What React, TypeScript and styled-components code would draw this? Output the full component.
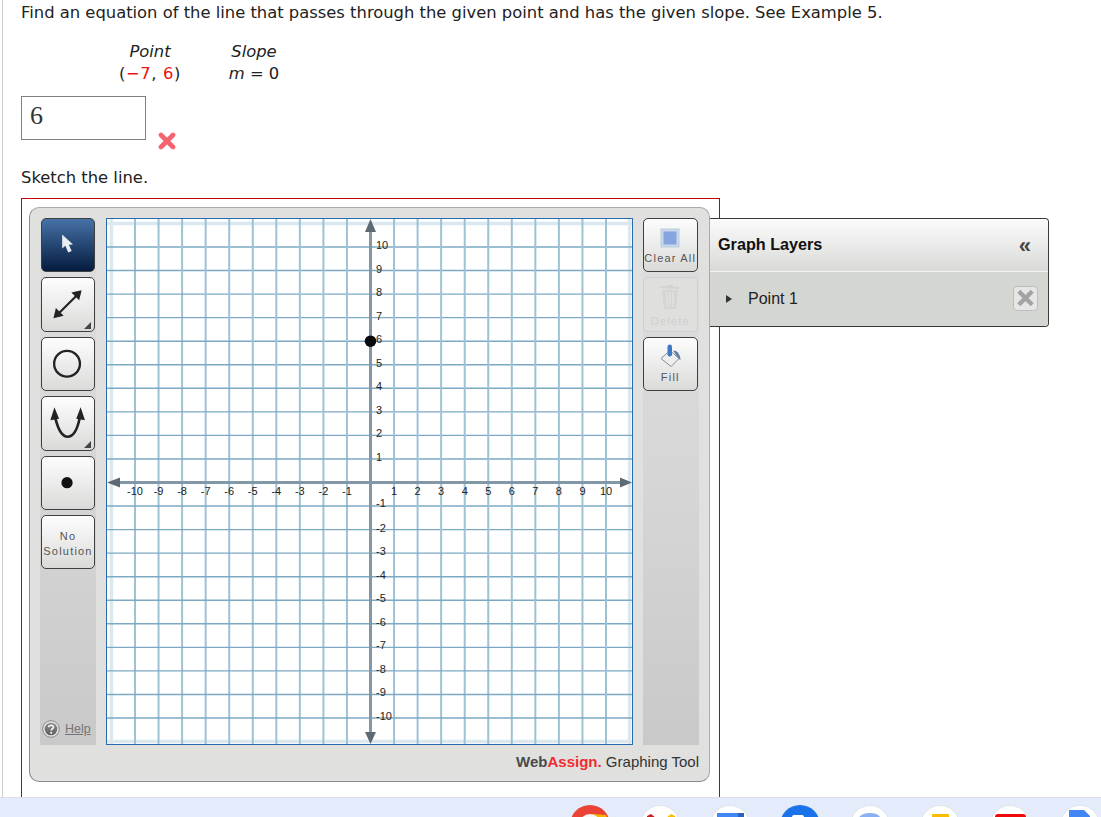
import { ReactNode } from "react";
import styled, { createGlobalStyle } from "styled-components";

const GlobalStyle = createGlobalStyle`
  html, body {
    margin: 0;
    padding: 0;
    background: #fff;
    overflow: hidden;
  }
`;

const UNIT = 23.55;
const OX = 264.5;
const OY = 264.5;
const TICKS = Array.from({ length: 21 }, (_, i) => i - 10).filter((n) => n !== 0);

const GraphPlot = () => (
  <PlotSvg viewBox="0 0 527 527" width="527" height="527">
    <rect x="0" y="0" width="527" height="527" fill="#fff" />
    {[-11, 11].map((n) => (
      <g key={n} stroke="#dbe8ef" strokeWidth="3.5">
        <line x1={OX + n * UNIT} y1="0" x2={OX + n * UNIT} y2="527" />
        <line x1="0" y1={OY + n * UNIT} x2="527" y2={OY + n * UNIT} />
      </g>
    ))}
    {TICKS.map((n) => (
      <g key={n}>
        <line x1={OX + n * UNIT} y1="0" x2={OX + n * UNIT} y2="527" stroke="#9dc2d5" strokeWidth="2" />
        <line x1="0" y1={OY + n * UNIT} x2="527" y2={OY + n * UNIT} stroke="#7ba9c4" strokeWidth="1.4" />
      </g>
    ))}
    <line x1={OX} y1="6" x2={OX} y2="521" stroke="#8398a6" strokeWidth="3" />
    <line x1="6" y1={OY} x2="521" y2={OY} stroke="#8398a6" strokeWidth="3" />
    <polygon points={`${OX},1 ${OX - 5.5},14 ${OX + 5.5},14`} fill="#5d6a73" />
    <polygon points={`${OX},526 ${OX - 5.5},514 ${OX + 5.5},514`} fill="#5d6a73" />
    <polygon points={`1,${OY} 14,${OY - 5} 14,${OY + 5}`} fill="#5d6a73" />
    <polygon points={`526,${OY} 514,${OY - 5} 514,${OY + 5}`} fill="#5d6a73" />
    {TICKS.map((n) => (
      <PlotLabel key={`x${n}`} x={OX + n * UNIT} y={OY + 12.5} textAnchor="middle">
        {n}
      </PlotLabel>
    ))}
    {TICKS.map((n) => (
      <PlotLabel key={`y${n}`} x={OX + 5.5} y={OY - n * UNIT + (n === -1 ? 1 : 2)}>
        {n}
      </PlotLabel>
    ))}
    <circle cx={OX} cy={OY - 6 * UNIT} r="5.8" fill="#07090c" />
  </PlotSvg>
);

const CornerMark = () => (
  <svg viewBox="0 0 54 54" width="54" height="54" style={{ position: "absolute", left: 0, top: 0 }}>
    <polygon points="49,44 49,51 42,51" fill="#444" />
  </svg>
);

const ArrowIcon = () => (
  <svg viewBox="0 0 54 54" width="54" height="54">
    <path d="M21 16 L21 30.5 L24.3 27.6 L27.2 34.5 L30.8 33 L27.9 26.5 L32.2 26.2 Z" fill="#e8edf4" />
  </svg>
);

const LineIcon = () => (
  <svg viewBox="0 0 54 54" width="54" height="54">
    <line x1="16" y1="38" x2="37" y2="17" stroke="#222" strokeWidth="2.2" />
    <polygon points="41,12.5 38.5,23 30.5,15" fill="#222" />
    <polygon points="12,41.5 14.5,31 22.5,39" fill="#222" />
  </svg>
);

const CircleIcon = () => (
  <svg viewBox="0 0 54 54" width="54" height="54">
    <circle cx="26" cy="26.5" r="13.3" fill="none" stroke="#222" strokeWidth="2.4" />
  </svg>
);

const ParabolaIcon = () => (
  <svg viewBox="0 0 54 54" width="54" height="54">
    <path d="M14 22 C17 34 21.5 41 26.8 41 C32 41 36.5 34 39 22" fill="none" stroke="#222" strokeWidth="2.7" />
    <polygon points="13,10.5 8.8,24 17.8,22.5" fill="#222" />
    <polygon points="40,10.5 44.5,24 35.5,22.5" fill="#222" />
  </svg>
);

const DotIcon = () => (
  <svg viewBox="0 0 54 54" width="54" height="54">
    <circle cx="26" cy="26.5" r="5.8" fill="#111" />
  </svg>
);

const ClearIcon = () => (
  <svg viewBox="0 0 20 20" width="20" height="20">
    <rect x="1" y="1" width="18" height="18" fill="#c9d8ea" stroke="#bccbe0" />
    <rect x="3.5" y="3.5" width="13" height="13" fill="#86a5de" />
  </svg>
);

const TrashIcon = () => (
  <svg viewBox="0 0 22 28" width="22" height="28">
    <path d="M1 4 L20 5 M8 3 L14 3" stroke="#d3d3d2" strokeWidth="2" />
    <path d="M3 7 H19 L17 26 H5 Z" fill="#d5d5d4" />
    <path d="M8 9 V24 M11 9 V24 M14 9 V24" stroke="#e3e3e2" strokeWidth="1.3" />
  </svg>
);

const FillIcon = () => (
  <svg viewBox="0 0 24 24" width="24" height="24">
    <g transform="translate(1 1.5)">
      <path d="M2 14 L11 6 L20 14 L12 22 Z" fill="#eceff1" stroke="#8c8c8c" />
      <path d="M14 6 C19 6 21.5 11 21.5 16 L18 12 Z" fill="#5f7fa8" />
      <rect x="8.5" y="0" width="4.5" height="12" rx="2.2" fill="#3f78c4" />
    </g>
  </svg>
);

const HelpIcon = () => (
  <svg viewBox="0 0 18 18" width="18" height="18">
    <defs>
      <linearGradient id="helpFill" x1="0" y1="0" x2="0" y2="1">
        <stop offset="0" stopColor="#8d8d8d" />
        <stop offset="1" stopColor="#5d5d5d" />
      </linearGradient>
    </defs>
    <circle cx="9" cy="9" r="8.3" fill="#e4e4e4" stroke="#8a8a8a" />
    <circle cx="9" cy="9" r="6.3" fill="url(#helpFill)" />
    <path d="M6.7 7.3 C6.8 4.7 11.4 4.8 11.4 7.2 C11.4 8.8 9.2 8.8 9.2 10.6" fill="none" stroke="#f2f2f2" strokeWidth="1.7" />
    <circle cx="9.2" cy="12.8" r="1.1" fill="#f2f2f2" />
  </svg>
);

const WrongMark = () => (
  <svg viewBox="0 0 18 18" width="18" height="18">
    <path d="M3 3 L15 15 M15 3 L3 15" stroke="#f6626e" strokeWidth="4.6" strokeLinecap="round" />
  </svg>
);

const DOCK: ReactNode[] = [
  <>
    <circle cx="20" cy="20" r="20" fill="#ea4335" />
    <path d="M22 9 L36 10 L40 20 L26 20 Z" fill="#f4b400" />
    <circle cx="20" cy="20" r="11" fill="#f5f5f5" />
  </>,
  <>
    <circle cx="20" cy="20" r="19.5" fill="#fff" stroke="#dfe3ea" />
    <path d="M7 11 L11 9 L16 13 L13 18 L7 14 Z" fill="#c5221f" />
    <path d="M26 13 L31 9 L35 11 L35 16 L27 17 Z" fill="#fbbc04" />
  </>,
  <>
    <circle cx="20" cy="20" r="19.5" fill="#fff" stroke="#dfe3ea" />
    <rect x="7" y="8" width="27" height="14" fill="#4285f4" />
    <rect x="28" y="8" width="6" height="14" fill="#2a62c4" />
  </>,
  <>
    <circle cx="20" cy="20" r="20" fill="#1a73e8" />
    <rect x="12" y="10" width="12" height="12" rx="2" fill="#fff" />
  </>,
  <>
    <circle cx="20" cy="20" r="19.5" fill="#fff" stroke="#dfe3ea" />
    <path d="M7 20 C7 11 12 8 20 8 C28 8 32 11 32 20 Z" fill="#8ab0f4" />
  </>,
  <>
    <circle cx="20" cy="20" r="19.5" fill="#fff" stroke="#dfe3ea" />
    <rect x="12" y="9" width="17" height="14" fill="#fbbc04" />
  </>,
  <>
    <circle cx="20" cy="20" r="19.5" fill="#fff" stroke="#dfe3ea" />
    <rect x="5" y="9" width="31" height="14" rx="3" fill="#ee0a0a" />
  </>,
  <>
    <circle cx="20" cy="20" r="19.5" fill="#fff" stroke="#dfe3ea" />
    <path d="M9 5 H24 L30 11 V24 H9 Z" fill="#4285f4" />
  </>,
];

const App = () => (
  <>
    <GlobalStyle />
    <Viewport>
      <Sheet>
        <Prompt>
          Find an equation of the line that passes through the given point and has the given slope. See Example 5.
        </Prompt>
        <GivenTable>
          <GivenCell>
            <em>Point</em>
            <GivenValue>
              (<Red>−7</Red>, <Red>6</Red>)
            </GivenValue>
          </GivenCell>
          <GivenCell>
            <em>Slope</em>
            <span>
              <em>m</em> = 0
            </span>
          </GivenCell>
        </GivenTable>
        <AnswerRow>
          <AnswerBox>6</AnswerBox>
          <WrongSlot>
            <WrongMark />
          </WrongSlot>
        </AnswerRow>
        <SketchLabel>Sketch the line.</SketchLabel>
        <RedFrame>
          <ToolPanel>
            <PanelBody>
              <ToolColumn>
                <ToolButton $active>
                  <ArrowIcon />
                </ToolButton>
                <ToolButton>
                  <LineIcon />
                  <CornerMark />
                </ToolButton>
                <ToolButton>
                  <CircleIcon />
                </ToolButton>
                <ToolButton>
                  <ParabolaIcon />
                  <CornerMark />
                </ToolButton>
                <ToolButton>
                  <DotIcon />
                </ToolButton>
                <ToolButton $nudge={4}>
                  <ButtonText>
                    No
                    <br />
                    Solution
                  </ButtonText>
                </ToolButton>
                <HelpRow>
                  <HelpIcon />
                  <HelpLink>Help</HelpLink>
                </HelpRow>
              </ToolColumn>
              <GraphPlot />
              <ActionColumn>
                <ToolButton $nudge={4}>
                  <ClearIcon />
                  <ButtonText>Clear All</ButtonText>
                </ToolButton>
                <ToolButton $disabled $nudge={2}>
                  <TrashIcon />
                  <ButtonText $disabled>Delete</ButtonText>
                </ToolButton>
                <ToolButton>
                  <FillIcon />
                  <ButtonText>Fill</ButtonText>
                </ToolButton>
              </ActionColumn>
            </PanelBody>
            <Brand>
              <BrandWeb>Web</BrandWeb>
              <BrandAssign>Assign.</BrandAssign> Graphing Tool
            </Brand>
          </ToolPanel>
          <LayersPanel>
            <LayersHeader>
              <LayersTitle>Graph Layers</LayersTitle>
              <Collapse>«</Collapse>
            </LayersHeader>
            <LayerRow>
              <LayerCaret />
              <LayerName>Point 1</LayerName>
              <LayerRemove>
                <svg viewBox="0 0 24 24" width="24" height="24">
                  <path d="M5 5 L19 19 M19 5 L5 19" stroke="#a3a3a3" strokeWidth="4.6" />
                </svg>
              </LayerRemove>
            </LayerRow>
          </LayersPanel>
        </RedFrame>
      </Sheet>
      <Dock>
        {DOCK.map((icon, i) => (
          <svg key={i} viewBox="0 0 40 40" width="40" height="40">
            {icon}
          </svg>
        ))}
      </Dock>
    </Viewport>
  </>
);

export default App;

const Viewport = styled.div`
  width: 1101px;
  height: 817px;
  overflow: hidden;
  display: flex;
  flex-direction: column;
  font-family: "DejaVu Sans", sans-serif;
  color: #222;
`;

const Sheet = styled.div`
  height: 797px;
  flex-shrink: 0;
  margin-left: 2px;
  padding: 1px 0 0 18px;
  border-left: 1px solid #ccc;
  box-sizing: border-box;
  display: flex;
  flex-direction: column;
`;

const Prompt = styled.div`
  font-size: 16.38px;
  line-height: 24px;
  white-space: nowrap;
`;

const GivenTable = styled.div`
  display: flex;
  height: 44px;
  margin-top: 16px;
  padding-left: 77px;
`;

const GivenCell = styled.div`
  width: 104px;
  display: flex;
  flex-direction: column;
  align-items: center;
  font-size: 16.38px;
  line-height: 22px;
`;

const GivenValue = styled.span`
  letter-spacing: 0.6px;
`;

const Red = styled.span`
  color: #f01010;
`;

const AnswerRow = styled.div`
  display: flex;
  margin-top: 11px;
`;

const AnswerBox = styled.div`
  width: 125px;
  height: 44px;
  box-sizing: border-box;
  border: 1px solid #808080;
  padding-left: 8px;
  font-family: "Liberation Serif", serif;
  font-size: 26px;
  line-height: 38px;
  color: #333;
`;

const WrongSlot = styled.div`
  margin: 36px 0 0 12px;
  height: 18px;
`;

const SketchLabel = styled.div`
  font-size: 16.38px;
  line-height: 22px;
  margin-top: 17px;
`;

const RedFrame = styled.div`
  flex: 1;
  width: 699px;
  box-sizing: border-box;
  margin-top: 9px;
  border: 1px solid #c40000;
  border-bottom: none;
  padding: 8px 0 0 7px;
  display: flex;
  align-items: flex-start;
`;

const ToolPanel = styled.div`
  width: 681px;
  height: 575px;
  flex-shrink: 0;
  box-sizing: border-box;
  padding: 10px 10px 0 10px;
  background: #e0e0df;
  border-left: 1px solid #8b8b8b;
  border-bottom: 1px solid #8b8b8b;
  border-top: 1px solid #aaa;
  border-right: 1px solid #aaa;
  border-radius: 10px;
`;

const PanelBody = styled.div`
  display: flex;
  gap: 10px;
  height: 527px;
`;

const ToolColumn = styled.div`
  position: relative;
  width: 56px;
  flex-shrink: 0;
  display: flex;
  flex-direction: column;
  gap: 5px;
  background: linear-gradient(#dedede, #d6d6d6 50%, #c9c9c9);
  align-items: center;
`;

const ActionColumn = styled(ToolColumn)`
  align-items: flex-start;
`;

const PlotSvg = styled.svg`
  display: block;
  flex-shrink: 0;
  box-sizing: border-box;
  outline: 1px solid #2a6cab;
  outline-offset: -1px;
`;

const PlotLabel = styled.text`
  font-family: "Liberation Sans", sans-serif;
  font-size: 11px;
  fill: #222;
`;

const ToolButton = styled.div<{ $active?: boolean; $disabled?: boolean; $nudge?: number }>`
  position: relative;
  width: 54.5px;
  height: 54.4px;
  flex-shrink: 0;
  box-sizing: border-box;
  padding-top: ${(p) => p.$nudge ?? 0}px;
  border: 1px solid ${(p) => (p.$disabled ? "#cfcfce" : "#3f3f3f")};
  border-radius: 5px;
  display: flex;
  flex-direction: column;
  align-items: center;
  justify-content: center;
  gap: 3px;
  background: ${(p) =>
    p.$active
      ? "linear-gradient(#4672a6, #041b3f)"
      : p.$disabled
        ? "#dfdfde"
        : "linear-gradient(#fdfdfd, #dadbd9)"};
`;

const ButtonText = styled.div<{ $disabled?: boolean }>`
  font-family: "Liberation Sans", sans-serif;
  font-size: 11px;
  line-height: 15px;
  letter-spacing: 1.2px;
  text-align: center;
  white-space: nowrap;
  color: ${(p) => (p.$disabled ? "#d0d0cf" : "#555")};
`;

const HelpRow = styled.div`
  position: absolute;
  left: 2px;
  bottom: 7px;
  display: flex;
  align-items: center;
  gap: 5px;
`;

const HelpLink = styled.span`
  font-family: "Liberation Sans", sans-serif;
  font-size: 12.5px;
  color: #757575;
  text-decoration: underline;
`;

const Brand = styled.div`
  margin-top: 7px;
  text-align: right;
  font-family: "Liberation Sans", sans-serif;
  font-size: 15px;
  line-height: 20px;
  color: #333;
`;

const BrandWeb = styled.b`
  color: #4a4a4a;
`;

const BrandAssign = styled.b`
  color: #f02b30;
`;

const LayersPanel = styled.div`
  width: 339px;
  height: 109px;
  flex-shrink: 0;
  margin-top: 11px;
  box-sizing: border-box;
  border: 1px solid #3a3a3a;
  border-left: none;
  border-radius: 0 4px 4px 0;
  display: flex;
  flex-direction: column;
  font-family: "Liberation Sans", sans-serif;
`;

const LayersHeader = styled.div`
  height: 53px;
  box-sizing: border-box;
  padding: 0 17px 2px 8px;
  display: flex;
  align-items: center;
  justify-content: space-between;
  background: linear-gradient(#fbfbfb, #d9dad8);
  border-bottom: 1px solid #f4f4f4;
  border-radius: 0 4px 0 0;
`;

const LayersTitle = styled.span`
  font-size: 16.2px;
  font-weight: bold;
  color: #111;
`;

const Collapse = styled.span`
  margin-top: 4px;
  font-size: 22px;
  font-weight: bold;
  color: #444;
`;

const LayerRow = styled.div`
  flex: 1;
  display: flex;
  align-items: center;
  padding: 0 10px 0 16px;
  background: #d4d6d2;
  border-radius: 0 0 4px 0;
`;

const LayerCaret = styled.span`
  width: 0;
  height: 0;
  border-top: 4px solid transparent;
  border-bottom: 4px solid transparent;
  border-left: 6px solid #333;
`;

const LayerName = styled.span`
  margin-left: 16px;
  font-size: 16px;
  color: #222;
  flex: 1;
`;

const LayerRemove = styled.div`
  width: 25px;
  height: 25px;
  margin-top: -2px;
  box-sizing: border-box;
  border: 1px solid #bdbdbd;
  border-radius: 4px;
  background: #e6e6e6;
  display: flex;
  align-items: center;
  justify-content: center;
`;

const Dock = styled.div`
  height: 20px;
  flex-shrink: 0;
  box-sizing: border-box;
  overflow: hidden;
  border-top: 1px solid #d9dee8;
  background: #e4ecfb;
  padding: 7px 0 0 570px;
  display: flex;
  gap: 30px;
  svg {
    flex-shrink: 0;
  }
`;
